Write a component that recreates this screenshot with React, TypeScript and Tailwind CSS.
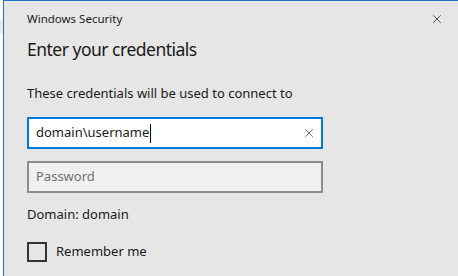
import { X } from 'lucide-react';

const App = () => {
  return (
    <div className="flex h-[276px] w-[458px] overflow-hidden bg-white font-['Noto_Sans',sans-serif] text-[#1a1a1a]">
      <div className="w-[3px] shrink-0 bg-white">
        <div className="mt-[20px] h-[13px] bg-[#e8e8e8]" />
      </div>

      <section className="flex flex-1 flex-col border-t border-l border-[#1f74c4] bg-[#e6e6e6] pl-[23px] pr-[16px]">
        <header className="flex h-[35px] items-center justify-between">
          <h1 className="text-[11.5px] leading-none">Windows Security</h1>
          <button className="-mr-[2px] mt-[1px] text-[#111]">
            <X size={14} strokeWidth={1.2} />
          </button>
        </header>

        <h2 className="mt-[1px] text-[17.5px] leading-[24px] tracking-[-0.5px]">Enter your credentials</h2>

        <p className="mt-[23px] text-[13px] leading-[18px]">
          These credentials will be used to connect to
        </p>

        <div className="mt-[15px] flex h-[32px] w-[296px] items-center border-2 border-[#0078d7] bg-white pl-[7px] pr-[5px]">
          <span className="text-[13px]">domain\username</span>
          <span className="ml-[1px] h-[19px] w-px bg-black" />
          <X className="ml-auto text-[#333]" size={14} strokeWidth={1.2} />
        </div>

        <div className="mt-[12px] flex h-[32px] w-[296px] items-center border-2 border-[#8c8c8c] bg-[#f0f0f0] pl-[7px]">
          <span className="text-[13px] text-[#707070]">Password</span>
        </div>

        <p className="mt-[12px] text-[13px] leading-[18px]">Domain: domain</p>

        <label className="mt-[19px] flex items-center gap-[9px]">
          <span className="h-[20px] w-[20px] border-2 border-[#333]" />
          <span className="text-[13px]">Remember me</span>
        </label>
      </section>
    </div>
  );
};

export default App;
